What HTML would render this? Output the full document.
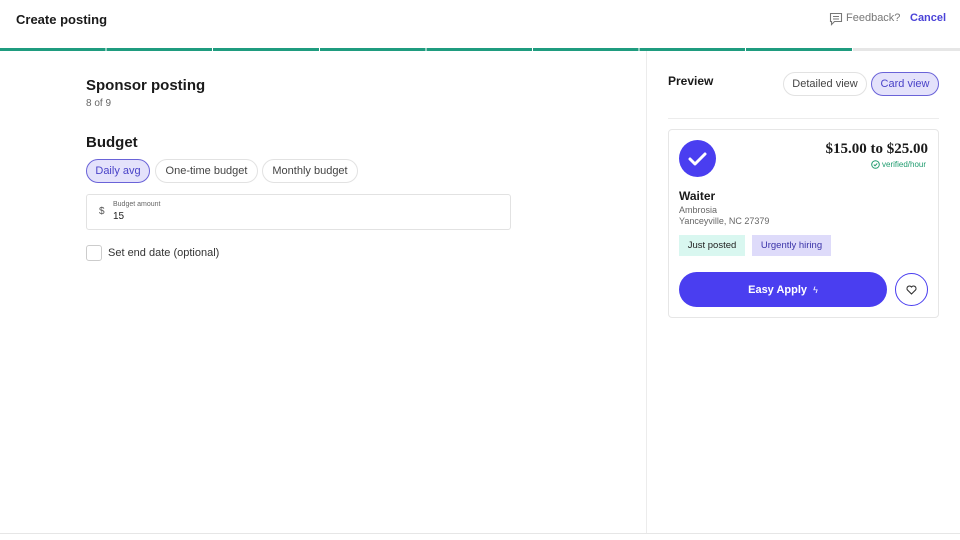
<!DOCTYPE html>
<html><head><style>
*{box-sizing:border-box;margin:0;padding:0}
body{width:960px;height:540px;background:#fff;font-family:"Liberation Sans",sans-serif;color:#1a1a1a;position:relative;overflow:hidden}
.abs{position:absolute}
.pill{position:absolute;height:24px;border:1px solid #e2e2e2;border-radius:12px;font-size:11px;color:#444;display:flex;align-items:center;justify-content:center}
.sel{background:#e4e2fb;border-color:#6a63d8;color:#4a43c8}
</style></head><body>
<div class="abs" style="left:16px;top:12px;font-size:13px;font-weight:bold">Create posting</div>
<svg class="abs" style="left:829px;top:12px" width="14" height="14" viewBox="0 0 14 14"><path d="M1.5 1.5h11v8h-7l-3 3v-3h-1z" fill="none" stroke="#777" stroke-width="1.1"/><path d="M4 4.5h6M4 7h6" stroke="#777" stroke-width="1"/></svg>
<div class="abs" style="left:846px;top:12px;font-size:11px;color:#777">Feedback?</div>
<div class="abs" style="left:910px;top:12px;font-size:11px;color:#4a43d8;font-weight:bold">Cancel</div>
<div class="abs" style="left:0;top:48px;width:960px;height:3px;background:#e6e6e6"></div>
<div class="abs" style="left:0;top:48px;width:853px;height:3px;background:repeating-linear-gradient(90deg,#1f9c7f 0 105.6px,#fff 105.6px 106.6px)"></div>
<div class="abs" style="left:646px;top:51px;width:1px;height:483px;background:#ececec"></div>
<div class="abs" style="left:0;top:533px;width:960px;height:1px;background:#e6e6e6"></div>

<div class="abs" style="left:86px;top:77px;font-size:15px;font-weight:bold">Sponsor posting</div>
<div class="abs" style="left:86px;top:98px;font-size:10px;color:#666">8 of 9</div>
<div class="abs" style="left:86px;top:134px;font-size:15px;font-weight:bold">Budget</div>
<div class="pill sel" style="left:86px;top:159px;width:64px">Daily avg</div>
<div class="pill" style="left:155px;top:159px;width:103px">One-time budget</div>
<div class="pill" style="left:262px;top:159px;width:96px">Monthly budget</div>
<div class="abs" style="left:86px;top:194px;width:425px;height:36px;border:1px solid #e2e2e2;border-radius:3px"></div>
<div class="abs" style="left:99px;top:206px;font-size:10px;color:#555">$</div>
<div class="abs" style="left:113px;top:201px;font-size:7px;color:#666">Budget amount</div>
<div class="abs" style="left:113px;top:211px;font-size:10px;color:#222">15</div>
<div class="abs" style="left:86px;top:245px;width:16px;height:16px;border:1px solid #ccc;border-radius:3px"></div>
<div class="abs" style="left:108px;top:247px;font-size:11px;color:#333">Set end date (optional)</div>

<div class="abs" style="left:668px;top:74px;font-size:12px;font-weight:bold">Preview</div>
<div class="pill" style="left:783px;top:72px;width:84px">Detailed view</div>
<div class="pill sel" style="left:871px;top:72px;width:68px">Card view</div>
<div class="abs" style="left:668px;top:118px;width:271px;height:1px;background:#ececec"></div>
<div class="abs" style="left:668px;top:129px;width:271px;height:189px;border:1px solid #e6e6e6;border-radius:4px"></div>
<svg class="abs" style="left:679px;top:140px" width="37" height="37" viewBox="0 0 37 37"><circle cx="18.5" cy="18.5" r="18.5" fill="#4a3ef0"/><path d="M11 19l5 5 10-10" fill="none" stroke="#fff" stroke-width="3" stroke-linecap="round" stroke-linejoin="round"/></svg>
<div class="abs" style="left:780px;top:141px;width:148px;text-align:right;font-family:'Liberation Serif',serif;font-size:15px;font-weight:bold">$15.00 to $25.00</div>
<svg class="abs" style="left:871px;top:160px" width="9" height="9" viewBox="0 0 9 9"><circle cx="4.5" cy="4.5" r="3.8" fill="none" stroke="#1f9c6f"/><path d="M2.8 4.6l1.2 1.2 2.2-2.3" fill="none" stroke="#1f9c6f"/></svg>
<div class="abs" style="left:882px;top:160px;font-size:8px;color:#1f9c6f">verified/hour</div>
<div class="abs" style="left:679px;top:189px;font-size:12px;font-weight:bold">Waiter</div>
<div class="abs" style="left:679px;top:205px;font-size:9px;color:#666;line-height:11px">Ambrosia<br>Yanceyville, NC 27379</div>
<div class="abs" style="left:679px;top:235px;width:66px;height:21px;background:#d9f7f0;font-size:9.5px;color:#222;display:flex;align-items:center;justify-content:center">Just posted</div>
<div class="abs" style="left:752px;top:235px;width:79px;height:21px;background:#dedbfa;font-size:9.5px;color:#3a33a8;display:flex;align-items:center;justify-content:center">Urgently hiring</div>
<div class="abs" style="left:679px;top:272px;width:208px;height:35px;background:#4a3ef0;border-radius:18px;color:#fff;font-size:11px;font-weight:bold;display:flex;align-items:center;justify-content:center">Easy Apply&nbsp;&nbsp;<span style="font-size:9px;font-weight:normal">ϟ</span></div>
<div class="abs" style="left:895px;top:273px;width:33px;height:33px;border:1px solid #4a3ef0;border-radius:50%"></div>
<svg class="abs" style="left:906px;top:285px" width="11" height="10" viewBox="0 0 11 10"><path d="M5.5 9L1.5 5A2.2 2.2 0 0 1 5.5 2 2.2 2.2 0 0 1 9.5 5z" fill="none" stroke="#333" stroke-width="1.1"/></svg>
</body></html>
